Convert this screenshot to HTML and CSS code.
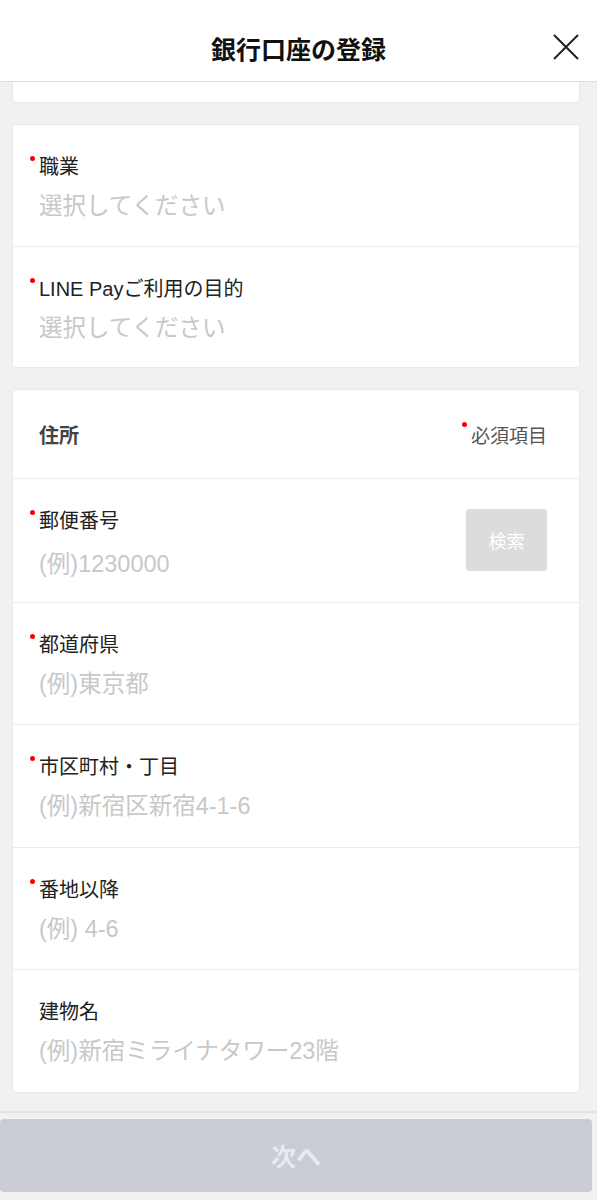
FILE: index.html
```html
<!DOCTYPE html>
<html lang="ja">
<head>
    <meta charset="UTF-8">
    <title>銀行口座の登録</title>
    <link rel="stylesheet" href="styles.css">
</head>
<body>
    <div class="header">
        <div class="title">銀行口座の登録</div>
        <svg class="close" width="26" height="26" viewBox="0 0 26 26">
            <path d="M1 1 L25 25 M25 1 L1 25" stroke="#222" stroke-width="2" fill="none"/>
        </svg>
    </div>

    <div class="content">
        <div class="card card-cut"></div>

        <div class="card card-short">
            <div class="row">
                <div class="field">
                    <div class="label required">職業</div>
                    <div class="placeholder">選択してください</div>
                </div>
            </div>
            <div class="row">
                <div class="field">
                    <div class="label required">LINE Payご利用の目的</div>
                    <div class="placeholder">選択してください</div>
                </div>
            </div>
        </div>

        <div class="card">
            <div class="card-head">
                <div class="card-title">住所</div>
                <div class="note required">必須項目</div>
            </div>
            <div class="row">
                <div class="field">
                    <div class="label required">郵便番号</div>
                    <div class="placeholder postal">(例)1230000</div>
                </div>
                <button type="button" class="search" disabled>検索</button>
            </div>
            <div class="row">
                <div class="field">
                    <div class="label required">都道府県</div>
                    <div class="placeholder">(例)東京都</div>
                </div>
            </div>
            <div class="row">
                <div class="field">
                    <div class="label required">市区町村・丁目</div>
                    <div class="placeholder">(例)新宿区新宿4-1-6</div>
                </div>
            </div>
            <div class="row">
                <div class="field">
                    <div class="label required">番地以降</div>
                    <div class="placeholder">(例) 4-6</div>
                </div>
            </div>
            <div class="row">
                <div class="field">
                    <div class="label">建物名</div>
                    <div class="placeholder">(例)新宿ミライナタワー23階</div>
                </div>
            </div>
        </div>
    </div>

    <div class="footer">
        <button type="button" class="next" disabled>次へ</button>
    </div>
</body>
</html>
```

FILE: styles.css
```css
body {
    margin: 0;
    font-family: "Liberation Sans", "Noto Sans CJK JP", sans-serif;
    background-color: #f1f1f1;
    color: #222;
}
.header {
    height: 81px;
    background-color: white;
    border-bottom: 1px solid #dedede;
    display: flex;
    align-items: center;
    justify-content: center;
    position: relative;
}
.title {
    font-size: 25px;
    font-weight: bold;
    color: #111;
    margin-top: 14px;
}
.close {
    position: absolute;
    right: 18px;
    top: 34px;
}
.content {
    padding: 0 17px 0 12px;
    display: flex;
    flex-direction: column;
    gap: 21px;
}
.card {
    background-color: white;
    border: 1px solid #e8e8e8;
    border-radius: 4px;
    box-sizing: border-box;
}
.card-cut {
    height: 21px;
    border-top: none;
    border-radius: 0 0 4px 4px;
}
.row {
    height: 122.5px;
    box-sizing: border-box;
    padding: 29px 32px 0 26px;
    display: flex;
    justify-content: space-between;
    align-items: flex-start;
}
.card-short .row {
    height: 121px;
}
.row + .row {
    border-top: 1px solid #ebebeb;
}
.label {
    font-size: 20px;
    line-height: 26px;
    position: relative;
}
.required::before {
    content: "";
    position: absolute;
    left: -9px;
    top: 2px;
    width: 5px;
    height: 5px;
    border-radius: 50%;
    background-color: #f00;
}
.placeholder {
    font-size: 23.5px;
    line-height: 28px;
    margin-top: 12px;
    color: #c8c8c8;
}
.postal {
    margin-top: 16px;
}
.card-head {
    height: 89px;
    box-sizing: border-box;
    padding: 0 32px 0 26px;
    border-bottom: 1px solid #ebebeb;
    display: flex;
    align-items: center;
    justify-content: space-between;
}
.card-title {
    font-size: 20px;
    font-weight: bold;
    color: #444;
}
.note {
    font-size: 19px;
    color: #555;
    position: relative;
}
.note::before {
    top: 1px;
}
.search {
    width: 81px;
    height: 62px;
    margin-top: 1px;
    border: none;
    border-radius: 3px;
    background-color: #dcdcdc;
    color: white;
    font-family: inherit;
    font-size: 18px;
}
.footer {
    margin-top: 18px;
    border-top: 2px solid #e3e3e6;
    padding: 6px 5px 9px 0;
}
.next {
    display: block;
    width: 100%;
    height: 73px;
    border: none;
    border-radius: 4px;
    background-color: #c9ccd5;
    color: #e9eaee;
    font-family: inherit;
    font-size: 25px;
    font-weight: bold;
}
```
